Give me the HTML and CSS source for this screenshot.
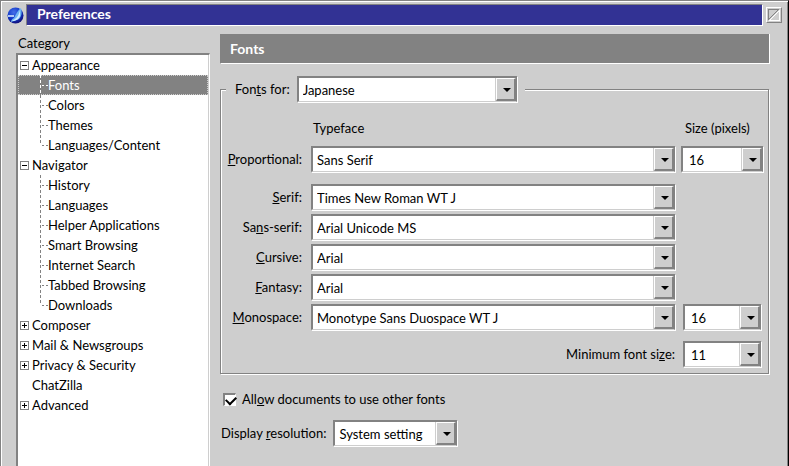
FILE: index.html
```
<!DOCTYPE html>
<html lang="en">
<head>
  <meta charset="UTF-8" />
  <meta name="viewport" content="width=device-width, initial-scale=1.0"/>
  <title>Preferences</title>
  <link rel="stylesheet" href="styles.css">
</head>
<body>
  <div class="window">
    <header class="titlebar">
      <svg class="app-icon" width="17" height="17" viewBox="0 0 17 17">
        <defs>
          <radialGradient id="ball" cx="0.4" cy="0.3" r="0.7">
            <stop offset="0" stop-color="#4470e8"/>
            <stop offset="0.6" stop-color="#1238c8"/>
            <stop offset="1" stop-color="#10107c"/>
          </radialGradient>
        </defs>
        <circle cx="8.5" cy="8.5" r="8" fill="url(#ball)"/>
        <path d="M1 8h6v2H1z" fill="#b0c8f4"/>
        <path d="M14 1c1 4 1 8-2 11-2 1-5 2-8 3 0-2 1-3 3-4 2-4 4-8 7-10z" fill="#6cb4f4"/>
        <path d="M13 3c-1 4-2 7-5 9l-3 2c4 0 7-2 8-5z" fill="#d0ecff"/>
      </svg>
      <h1>Preferences</h1>
      <button class="close" type="button" aria-label="Close">
        <svg width="12" height="12" viewBox="0 0 12 12" fill="none" shape-rendering="crispEdges">
          <path d="M0.5 11V0.5H11" stroke="#828282"/>
          <path d="M11.5 1v10.5H1" stroke="#fff"/>
          <path d="M1 10L10 1" stroke="#828282"/>
          <path d="M2 11L11 2" stroke="#fff"/>
        </svg>
      </button>
    </header>

    <div class="content">
      <!-- Category tree -->
      <nav class="sidebar">
        <h2>Category</h2>
        <ul class="tree">
          <li>
            <a href="#"><span class="twisty open"></span>Appearance</a>
            <ul>
              <li><a href="#" class="selected">Fonts</a></li>
              <li><a href="#">Colors</a></li>
              <li><a href="#">Themes</a></li>
              <li><a href="#">Languages/Content</a></li>
            </ul>
          </li>
          <li>
            <a href="#"><span class="twisty open"></span>Navigator</a>
            <ul>
              <li><a href="#">History</a></li>
              <li><a href="#">Languages</a></li>
              <li><a href="#">Helper Applications</a></li>
              <li><a href="#">Smart Browsing</a></li>
              <li><a href="#">Internet Search</a></li>
              <li><a href="#">Tabbed Browsing</a></li>
              <li><a href="#">Downloads</a></li>
            </ul>
          </li>
          <li><a href="#"><span class="twisty"></span>Composer</a></li>
          <li><a href="#"><span class="twisty"></span>Mail &amp; Newsgroups</a></li>
          <li><a href="#"><span class="twisty"></span>Privacy &amp; Security</a></li>
          <li><a href="#" class="leaf">ChatZilla</a></li>
          <li><a href="#"><span class="twisty"></span>Advanced</a></li>
        </ul>
      </nav>

      <!-- Fonts panel -->
      <main class="panel">
        <h2 class="panel-title">Fonts</h2>
        <fieldset>
          <legend>
            <label for="language">Fon<u>t</u>s for:</label>
            <span class="select language">
              <select id="language"><option>Japanese</option></select>
            </span>
          </legend>

          <div class="font-grid heads">
            <span class="col-typeface">Typeface</span>
            <span>Size (pixels)</span>
          </div>

          <div class="font-grid proportional">
            <label for="proportional"><u>P</u>roportional:</label>
            <span class="select"><select id="proportional"><option>Sans Serif</option></select></span>
            <span class="select size"><select aria-label="Proportional size"><option>16</option></select></span>
          </div>

          <div class="font-grid">
            <label for="serif"><u>S</u>erif:</label>
            <span class="select"><select id="serif"><option>Times New Roman WT J</option></select></span>
          </div>
          <div class="font-grid">
            <label for="sans-serif">Sa<u>n</u>s-serif:</label>
            <span class="select"><select id="sans-serif"><option>Arial Unicode MS</option></select></span>
          </div>
          <div class="font-grid">
            <label for="cursive"><u>C</u>ursive:</label>
            <span class="select"><select id="cursive"><option>Arial</option></select></span>
          </div>
          <div class="font-grid">
            <label for="fantasy"><u>F</u>antasy:</label>
            <span class="select"><select id="fantasy"><option>Arial</option></select></span>
          </div>
          <div class="font-grid">
            <label for="monospace"><u>M</u>onospace:</label>
            <span class="select"><select id="monospace"><option>Monotype Sans Duospace WT J</option></select></span>
            <span class="select size small"><select aria-label="Monospace size"><option>16</option></select></span>
          </div>
          <div class="font-grid minimum">
            <label class="wide" for="minimum">Minimum font si<u>z</u>e:</label>
            <span class="select size small"><select id="minimum"><option>11</option></select></span>
          </div>
        </fieldset>

        <div class="row allow">
          <input type="checkbox" id="allow" checked>
          <label for="allow">All<u>o</u>w documents to use other fonts</label>
        </div>
        <div class="row">
          <label for="resolution">Display <u>r</u>esolution:</label>
          <span class="select resolution">
            <select id="resolution"><option>System setting</option></select>
          </span>
        </div>
      </main>
    </div>
  </div>
</body>
</html>
```

FILE: styles.css
```
* {
  box-sizing: border-box;
}
body {
  margin: 0;
  background-color: #cecece;
  color: #000;
  font-family: Lato, sans-serif;
  font-size: 13px;
  line-height: 20px;
}
h1, h2 {
  margin: 0;
  font-size: 13px;
  font-weight: normal;
}
.window {
  display: flex;
  flex-direction: column;
  min-height: 100vh;
  border: 1px solid #828282;
  border-right-color: #000;
  border-bottom: none;
  box-shadow: inset 1px 1px #fff, inset -1px 0 #828282;
}

/* Title bar */
.titlebar {
  display: flex;
  align-items: center;
  padding: 3px 6px 0 6px;
}
.titlebar h1 {
  flex: 1;
  height: 22px;
  margin: 0 3px 0 2px;
  padding-left: 10px;
  border: 1px solid #828282;
  border-right-color: #fff;
  border-bottom-color: #fff;
  background-color: #323294;
  color: #fff;
  font-size: 14px;
  font-weight: bold;
  line-height: 18px;
}
.close {
  display: flex;
  width: 16px;
  height: 16px;
  padding: 1px;
  border: 1px solid #fff;
  border-right-color: #828282;
  border-bottom-color: #828282;
  background-color: #cecece;
}

.content {
  display: flex;
  flex: 1;
}

/* Category tree */
.sidebar {
  display: flex;
  flex-direction: column;
  width: 194px;
  margin: 7px 0 0 15px;
}
.sidebar h2 {
  padding-left: 2px;
}
.tree {
  flex: 1;
  border: 2px solid #828282;
  border-right: 1px solid #fff;
  border-bottom: none;
  background-color: #fff;
  box-shadow: inset -1px 0 #cecece;
}
.tree,
.tree ul {
  margin: 0;
  padding: 0;
  list-style: none;
}
.tree a {
  --line: #828282;
  display: flex;
  align-items: center;
  height: 20px;
  margin-right: 1px;
  color: #000;
  text-decoration: none;
}
.tree ul a::before {
  content: "";
  width: 8px;
  height: 20px;
  margin-left: 22px;
  background:
    repeating-linear-gradient(to bottom, var(--line) 0 3px, transparent 3px 5px) 0 0 / 1px 100% no-repeat,
    repeating-linear-gradient(to right, transparent 0 2px, var(--line) 2px 4px) 0 10px / 8px 1px no-repeat;
}
.tree ul li:last-child a::before {
  background-size: 1px 10px, 8px 1px;
}
.tree .selected {
  --line: #fff;
  background-color: #828282;
  color: #fff;
  outline: 1px dotted #cecece;
  outline-offset: -1px;
}
.twisty {
  width: 9px;
  height: 9px;
  margin: 0 3px 0 2px;
  border: 1px solid #828282;
  background:
    linear-gradient(#000, #000) 1px 3px / 5px 1px no-repeat,
    linear-gradient(#000, #000) 3px 1px / 1px 5px no-repeat;
}
.twisty.open {
  background: linear-gradient(#000, #000) 1px 3px / 5px 1px no-repeat;
}
.tree .leaf {
  padding-left: 14px;
}

/* Fonts panel */
.panel {
  flex: 1;
  min-width: 0;
  margin: 8px 18px 0 10px;
}
.panel-title {
  height: 30px;
  padding-left: 9px;
  border: 1px solid #fff;
  border-top: none;
  border-left-color: #828282;
  background-color: #828282;
  color: #fff;
  font-size: 14px;
  font-weight: bold;
  line-height: 29px;
}
fieldset {
  min-width: 0;
  margin: 12px 1px 15px 0;
  padding: 16px 5px 6px 0;
  border: 1px solid #828282;
  box-shadow: inset 1px 1px #fff, 1px 1px #fff;
}
legend {
  display: flex;
  align-items: center;
  margin-left: 5px;
  padding: 0 8px 0 9px;
  background-color: #cecece;
}
.font-grid {
  display: grid;
  grid-template-columns: 84px minmax(0, 1fr) 82px;
  column-gap: 6px;
  align-items: center;
  margin-bottom: 4px;
}
.font-grid label {
  padding-right: 3px;
  text-align: right;
  white-space: nowrap;
}
.font-grid .wide {
  grid-column: 1 / 3;
  padding-right: 0;
}
.heads {
  margin-bottom: 8px;
  white-space: nowrap;
}
.heads span {
  padding-left: 4px;
}
.heads .col-typeface {
  grid-column: 2;
  padding-left: 2px;
}
.proportional {
  margin-bottom: 12px;
}
.minimum {
  margin: 11px 0 0;
}

/* Drop-downs */
.select {
  position: relative;
  display: block;
}
.select select {
  appearance: none;
  display: block;
  width: 100%;
  height: 26px;
  padding: 0 20px 0 4px;
  border: 2px solid #828282;
  border-right-width: 1px;
  border-bottom: 1px solid #cecece;
  border-radius: 0;
  background-color: #fff;
  box-shadow: 1px 1px #fff;
  color: #000;
  font: inherit;
}
.select::before {
  content: "";
  position: absolute;
  top: 2px;
  right: 1px;
  bottom: 1px;
  width: 17px;
  border: 1px solid #fff;
  border-right: 2px solid #828282;
  border-bottom: 2px solid #828282;
  background-color: #cecece;
  box-shadow: -1px 0 #cecece;
  pointer-events: none;
}
.select::after {
  content: "";
  position: absolute;
  top: 12px;
  right: 6px;
  border: 4px solid transparent;
  border-top-color: #000;
  border-bottom: none;
  pointer-events: none;
}
.size select {
  padding-left: 6px;
}
.small {
  margin: 0 2px;
}
.language {
  width: 220px;
  margin-left: 7px;
}
.resolution {
  width: 124px;
  margin-left: 7px;
}

.row {
  display: flex;
  align-items: center;
  padding-left: 1px;
}
.allow {
  margin-bottom: 11px;
}
.allow input {
  appearance: none;
  width: 13px;
  height: 13px;
  margin: 0 6px 0 2px;
  border: 2px solid #828282;
  border-right: 1px solid #fff;
  border-bottom: 1px solid #fff;
  background-color: #fff;
}
.allow input:checked::before {
  content: "";
  display: block;
  width: 8px;
  height: 5px;
  margin: 1px;
  border: solid #000;
  border-width: 0 0 2px 2px;
  transform: rotate(-45deg);
}
```
